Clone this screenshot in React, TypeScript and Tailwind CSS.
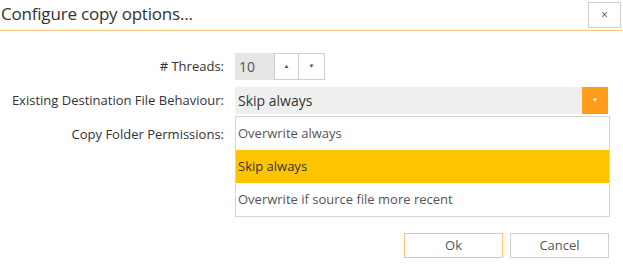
import { useState } from "react";

const options = ["Overwrite always", "Skip always", "Overwrite if source file more recent"];

export default function App() {
  const [threads] = useState(10);
  const [selected] = useState("Skip always");

  return (
    <div
      className="w-[623px] h-[275px] bg-white text-[#333] overflow-hidden"
      style={{ fontFamily: '"Open Sans", "Noto Sans", sans-serif' }}
    >
      {/* header */}
      <div className="h-[31px] flex items-start justify-between border-b border-[#fbc67a]">
        <h1 className="pl-[1px] pt-[2px] text-[17px] leading-[24px] text-[#333] tracking-[-0.2px]">
          Configure copy options...
        </h1>
        <button className="mt-[2px] mr-[2px] w-[33px] h-[26px] border border-[#d0d0d0] bg-white flex items-center justify-center text-[#555] text-[12px]">
          ×
        </button>
      </div>

      {/* form */}
      <div className="pt-[22px] grid grid-cols-[224px_375px] gap-x-[11px] gap-y-[7px] text-[13px]">
        <label className="h-[27px] flex items-center justify-end">#&nbsp;Threads:</label>
        <div className="h-[27px] flex">
          <div className="w-[39px] bg-[#e6e6e6] flex items-center pl-[4px] text-[14px] text-[#555]">{threads}</div>
          <div className="flex border border-[#cfcfcf] bg-white">
            <button className="w-[24px] flex items-center justify-center border-r border-[#cfcfcf] text-[6px] text-[#555]">▲</button>
            <button className="w-[25px] flex items-center justify-center text-[6px] text-[#555]">▼</button>
          </div>
        </div>

        <label className="h-[27px] flex items-center justify-end">Existing Destination File Behaviour:</label>
        <div className="relative h-[27px] w-[373px] flex bg-[#eef0ee]">
          <div className="flex-1 flex items-center pl-[3px] text-[14px] text-[#333]">{selected}</div>
          <div className="w-[26px] bg-[#ff9c1a] flex items-center justify-center text-white text-[6px]">▼</div>

          {/* open list */}
          <ul className="absolute left-0 top-[29px] w-[375px] bg-white border border-[#d6d6d0] text-[13px] text-[#555] z-10">
            {options.map((o) => (
              <li
                key={o}
                className={
                  o === selected
                    ? "h-[33px] flex items-center pl-[2px] bg-[#ffc400] text-[#333]"
                    : "h-[33px] flex items-center pl-[2px]"
                }
              >
                {o}
              </li>
            ))}
          </ul>
        </div>

        <label className="h-[27px] flex items-center justify-end">Copy Folder Permissions:</label>
        <div className="h-[27px]" />
      </div>

      {/* footer */}
      <div className="mt-[85px] flex justify-end gap-[7px] pr-[14px] text-[13px]">
        <button className="w-[99px] h-[25px] border border-[#ffc46b] bg-white text-[#555]">Ok</button>
        <button className="w-[99px] h-[25px] border border-[#cfcfcf] bg-white text-[#555]">Cancel</button>
      </div>
    </div>
  );
}
